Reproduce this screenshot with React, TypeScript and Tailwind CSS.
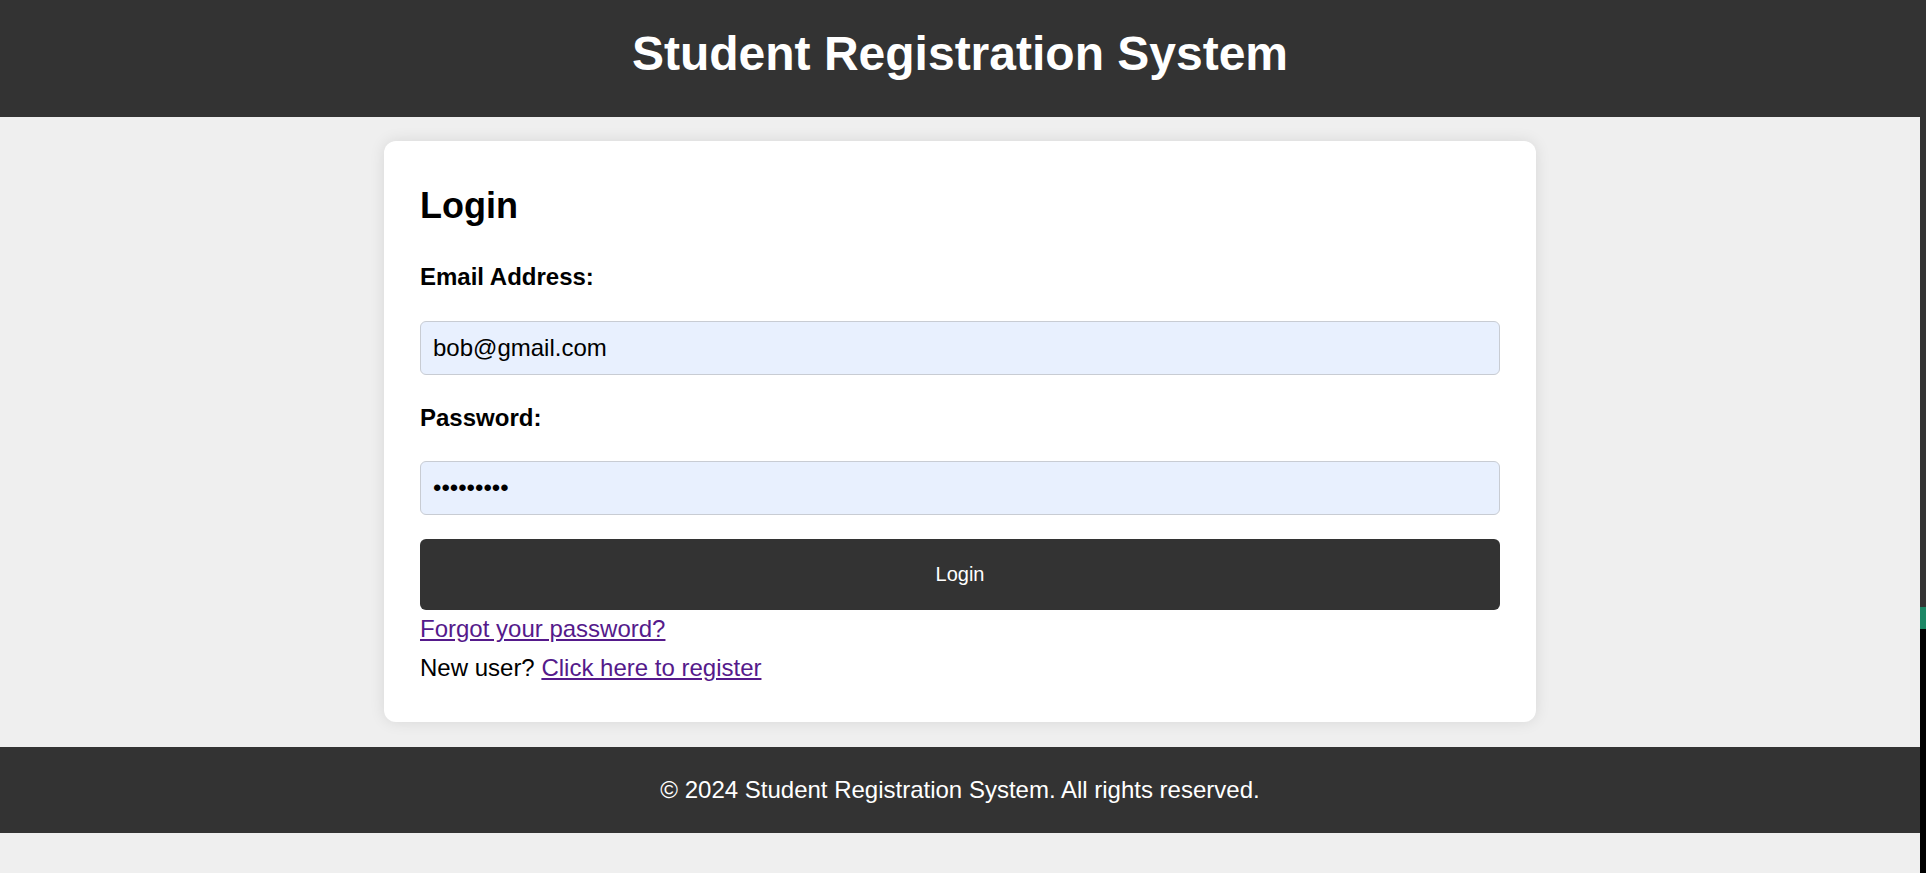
import { useState } from 'react';

export default function App() {
    const [email, setEmail] = useState<string>('bob@gmail.com');
    const [password, setPassword] = useState<string>('123456789');

    return (
        <div className="flex w-[1926px] min-h-[873px] bg-[#efefef] font-['Liberation_Sans',Arial,sans-serif] text-black">
            {/* main page column */}
            <div className="flex flex-col w-[1920px]">
                <header className="h-[117px] bg-[#333333] pt-[26px] text-center">
                    <h1 className="text-[48px] leading-[55px] font-bold text-white">Student Registration System</h1>
                </header>

                <main className="pt-[24px]">
                    <div className="w-[1152px] mx-auto bg-white rounded-[12px] shadow-[0_0_15px_rgba(0,0,0,0.1)] px-[36px] pt-[44px] pb-[40px]">
                        <h2 className="text-[36px] leading-[41px] font-bold">Login</h2>

                        <form onSubmit={(e) => e.preventDefault()} className="flex flex-col">
                            <label htmlFor="email" className="mt-[37px] text-[24px] leading-[28px] font-bold">
                                Email Address:
                            </label>
                            <input
                                id="email"
                                type="email"
                                value={email}
                                onChange={(e) => setEmail(e.target.value)}
                                className="mt-[30px] h-[54px] w-full px-[12px] text-[24px] bg-[#e8f0fe] border border-[#c8ccd3] rounded-[6px] outline-none"
                            />

                            <label htmlFor="password" className="mt-[29px] text-[24px] leading-[28px] font-bold">
                                Password:
                            </label>
                            <input
                                id="password"
                                type="password"
                                value={password}
                                onChange={(e) => setPassword(e.target.value)}
                                className="mt-[29px] h-[54px] w-full px-[12px] text-[24px] bg-[#e8f0fe] border border-[#c8ccd3] rounded-[6px] outline-none"
                            />

                            <button
                                type="submit"
                                className="mt-[24px] h-[71px] w-full pb-[2px] bg-[#333333] text-white text-[20px] rounded-[6px]"
                            >
                                Login
                            </button>
                        </form>

                        <p className="mt-[5px] text-[24px] leading-[28px]">
                            <a href="#" className="text-[#551a8b] underline">Forgot your password?</a>
                        </p>
                        <p className="mt-[11px] text-[24px] leading-[28px]">
                            New user? <a href="#" className="text-[#551a8b] underline">Click here to register</a>
                        </p>
                    </div>
                </main>

                <footer className="mt-[25px] h-[86px] bg-[#333333] flex items-center justify-center">
                    <p className="text-[24px] leading-[28px] text-white">© 2024 Student Registration System. All rights reserved.</p>
                </footer>
            </div>

            {/* thin strip along the right edge */}
            <div className="flex flex-col w-[6px]">
                <div className="h-[607px] bg-[#333333]" />
                <div className="h-[22px] bg-[#1b8765]" />
                <div className="flex-1 bg-black" />
            </div>
        </div>
    );
}
